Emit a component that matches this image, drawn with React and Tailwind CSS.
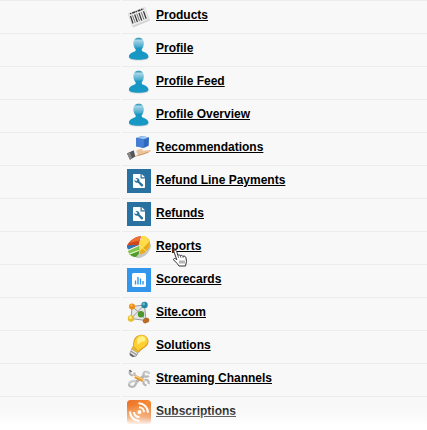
import React from "react";

function ProductsIcon() {
  return (
    <svg viewBox="0 0 24 24" className="h-6 w-6" aria-hidden="true">
      <path d="M1 10 18 4 23 16.500 6 23.500Z" fill="#cfcfcf" />
      <path d="M1 9.500 18 3.200 22 15.500 5.500 22Z" fill="#ececec" stroke="#d6d6d6" strokeWidth=".5" />
      <path d="M3 9.900 16.500 4.900" stroke="#333" strokeWidth="1.500" strokeDasharray="1.500 .8 3 .6" />
      <path d="m3.500 12 2.500 7.500M7.700 10.500l2.700 7.500M12 9l2.700 7.500M16.500 7.200l2.700 7.500" stroke="#333" strokeWidth="1.200" />
      <path d="m5.500 11.300 2.700 7.500M9.800 9.700l2.700 7.500M14.200 8.100l2.700 7.500" stroke="#777" strokeWidth="1" />
    </svg>
  );
}

function ProfileIcon() {
  return (
    <svg viewBox="0 0 24 24" className="h-6 w-6" aria-hidden="true">
      <defs>
        <linearGradient id="head" x1="0" y1="0" x2="0" y2="1">
          <stop offset="0" stopColor="#1d8eb4" />
          <stop offset=".12" stopColor="#a5d5e6" />
          <stop offset=".4" stopColor="#4aabcb" />
          <stop offset=".48" stopColor="#1697c4" />
          <stop offset="1" stopColor="#1898c4" />
        </linearGradient>
      </defs>
      <ellipse cx="11.800" cy="21.800" rx="9.500" ry="1.800" fill="#d5d5d5" />
      <path
        d="M11.600.8c3.200 0 5.200 2 5.200 5.200 0 2.700-.7 4.800-2 6.300v1.500c.2 1.200 6.700 1.600 6.700 6 0 2-4 3-9.800 3s-9.800-1-9.800-3c0-4.400 6.500-4.800 6.700-6v-1.500c-1.500-1.500-2.200-3.600-2.200-6.300 0-3.200 2-5.200 5.200-5.200Z"
        fill="url(#head)"
      />
    </svg>
  );
}

function RecommendationsIcon() {
  return (
    <svg viewBox="0 0 24 24" className="h-6 w-6" aria-hidden="true">
      <path d="m9 2 5-1.700 8 1-.3 8.500-5 2.200L9 10.300Z" fill="#2f68bd" />
      <path d="m9 2 5-1.700 8 1-5 1.900Z" fill="#9cc7f2" />
      <path d="m9 2 8 1.200-.2 8.800L9 10.300Z" fill="#447fd3" />
      <path d="m7 16 5-2.700c2-.7 4.500-.2 4 .8l-1.500 1 8-1c2.300-.1 2 1-.2 1.800l-8.300 3.100L7.500 21Z" fill="#edc49a" />
      <path d="m8 20 7-1.500 6.500-2.300" stroke="#c18756" fill="none" strokeWidth=".8" />
      <path d="m6 15.500 3-1 2 4.500-3.500 1.600Z" fill="#f3f3f3" />
      <path d="m0 17.500 6.700-3.200 1.600 6.200L3 23.800Z" fill="#555" />
      <path d="m0 17.500 3-1.500L5 22.500l-2 1.300Z" fill="#858585" />
    </svg>
  );
}

function RefundIcon() {
  return (
    <svg viewBox="0 0 24 24" className="h-6 w-6" aria-hidden="true">
      <path fill="#2871a0" d="M0 0h24v24H0z" />
      <path d="M7 5h6.500v4.500H18V18c0 .6-.4 1-1 1H7c-.6 0-1-.4-1-1V6c0-.6.4-1 1-1Z" fill="#fff" />
      <path d="m14.700 5 3.300 3.300h-3.300Z" fill="#fff" />
      <path
        d="M8.400 9.200c1.500-.7 3.500 0 4 1.600.2.600.1 1.100 0 1.500l3.500 3.300c1 1.100-.6 2.600-1.700 1.600l-3.300-3.500c-1.800.6-3.800-.5-3.500-2.900l1.700 1.500 1.500-1.500Z"
        fill="#2871a0"
      />
    </svg>
  );
}

function ReportsIcon() {
  return (
    <svg viewBox="0 0 24 24" className="h-6 w-6" aria-hidden="true">
      <path d="M1 12c4 5 5 9 9 11 7 1 14-7 14-13l-3-5Z" fill="#c5c5c5" />
      <path d="M0 10.500C2.500 5.500 8 1.800 14 1l-2.500 9.500L.8 14Z" fill="#d3471d" />
      <path d="M2 8C5 4.500 9 2 14 1l-1.500 4.500Z" fill="#ef7131" />
      <path d="m0 10.500 11.500-.8-10 4.700C.3 13.600-.2 12 0 10.500Z" fill="#2d77bb" />
      <path d="m1.300 15.200 10.200-4.200.5 7.500-3 3.500c-4.500 0-7.700-3-7.700-6.800Z" fill="#4f9d27" />
      <path d="m1.500 15.200 10-4.200.3 5-9.300 4Z" fill="#82c64b" />
      <path d="m1 15.400 10.500-4.600M2.300 19l9.500-3.500" stroke="#eef7df" strokeWidth="1" />
      <path d="M15 1.200c4-.6 8 2.500 8 7 0 5-4 9.500-9.500 11.300L12 10Z" fill="#e9ad19" />
      <path d="M15 1.200c4-.6 7 1.800 7 5.800L13 16l-1-6Z" fill="#ffdc4a" />
      <path d="m12 10 7.500 6.500" stroke="#fff3a5" strokeWidth=".7" />
    </svg>
  );
}

function ScorecardsIcon() {
  return (
    <svg viewBox="0 0 24 24" className="h-6 w-6" aria-hidden="true">
      <path fill="#3296ed" d="M0 0h24v24H0z" />
      <rect x="5" y="5" width="14" height="14" rx="1.500" fill="#fff" />
      <path d="M8.500 16.500v-4M11 16.500V9M13.500 16.500v-6M16 16.500V13" stroke="#3296ed" strokeWidth="1.400" />
    </svg>
  );
}

function SiteIcon() {
  return (
    <svg viewBox="0 0 24 24" className="h-6 w-6" aria-hidden="true">
      <path d="M5 5.500 17.500 4 19 19.500 4 17.500Z" fill="#e6e6e6" />
      <path d="M5 5.500 17.500 4 19 19.500M5 5.500 4 17.500 19 19.500M4 17.500 17.500 4M5 5.500l9 7.500 5 6.500" fill="none" stroke="#9a9a9a" strokeWidth="1" />
      <circle cx="5" cy="5.500" r="3" fill="#f08b0b" />
      <circle cx="4.500" cy="4.500" r="1.300" fill="#ffb24d" />
      <circle cx="17.500" cy="4" r="3.200" fill="#2487a2" />
      <circle cx="16.700" cy="3" r="1.400" fill="#69b6cb" />
      <circle cx="14" cy="13.200" r="3.200" fill="#4c972b" />
      <circle cx="4" cy="17.500" r="3.200" fill="#e5bd2d" />
      <circle cx="3.500" cy="16.500" r="1.500" fill="#ffec86" />
      <ellipse cx="19" cy="19.600" rx="3.400" ry="2.500" transform="rotate(-25 19 19.600)" fill="#b96c22" />
    </svg>
  );
}

function SolutionsIcon() {
  return (
    <svg viewBox="0 0 24 24" className="h-6 w-6" aria-hidden="true">
      <path d="M6 12.500C6 8 7 1 14.500.8c4 0 7 3 7 6.500 0 6-6.500 6.700-9.500 11.400Z" fill="#d69b20" />
      <path d="M6.500 12C7.500 8 8 1.500 14.500 1.300c4 0 6.200 2.700 6.200 5.700C20.700 12 15 13 11.500 17Z" fill="#ffcf32" />
      <path d="M10 6c.7-3 3.500-4.500 6.500-3.500 2 1 2.500 3 1.200 5C15 7 12 9 10.500 11.500Z" fill="#fff184" />
      <path d="m5.500 12.500 6.500 5-2 4c-2 3-8 1.500-7.500-2.500Z" fill="#999" />
      <path d="m5.500 12.500 6.500 5-1 1.500-6.500-4Z" fill="#eab52f" />
      <path d="m4.500 16 5.500 3.500M3.500 18.500l5 3" stroke="#ededed" strokeWidth="1.300" />
      <path d="m3 20 3.500 2.700" stroke="#555" strokeWidth="1.200" />
    </svg>
  );
}

function StreamingIcon() {
  return (
    <svg viewBox="0 0 24 24" className="h-6 w-6" aria-hidden="true">
      <path d="m9 15 8-6" stroke="#b5b5b5" strokeWidth="3" />
      <path d="M22 7c0-3-5.500-3-5.500.5 0 2.200 3.500 3 5.300 1.200M8.500 14.500C5.500 13 2 15 2 17.500c0 2.700 4.500 3 6 1l1.500-3" fill="none" stroke="#b8b8b8" strokeWidth="2.200" />
      <path d="M22 6.500c-.5-2-4.500-2-5 .5M8 14c-3-1-6 .8-6 3.200" fill="none" stroke="#e8e8e8" strokeWidth="1" />
      <path d="M3 4c-1.300 2.500.5 4 3 4.500M7.500 5.500 7.500 9M17 14c-1.500 2.500.5 4.500 2.500 4M17.500 13c3-1 5 1.500 4 4" fill="none" stroke="#b8b8b8" strokeWidth="2.200" />
      <path d="m8 9.500 8 4" stroke="#e39a33" strokeWidth="3.500" />
      <path d="m8.500 9 7.500 3.500" stroke="#ffd185" strokeWidth="1.300" />
      <path d="m2.500 3 2 2" stroke="#666" strokeWidth="1.500" />
    </svg>
  );
}

function SubscriptionsIcon() {
  return (
    <svg viewBox="0 0 24 24" className="h-6 w-6" aria-hidden="true">
      <defs>
        <linearGradient id="orange" x1="0" y1="0" x2="1" y2="1">
          <stop offset="0" stopColor="#e9702a" />
          <stop offset=".5" stopColor="#f58b35" />
          <stop offset="1" stopColor="#e36925" />
        </linearGradient>
      </defs>
      <rect width="24" height="24" rx="3.500" fill="url(#orange)" />
      <circle cx="12.500" cy="12" r="2" fill="#fff" />
      <path d="M12 7.200a5 5 0 0 1 5 5M11.500 3.200a9.500 9.500 0 0 1 9.500 9.500M7 12a5 5 0 0 0 5.500 5M3 11.500a9.500 9.500 0 0 0 9.500 9.500" fill="none" stroke="#fff" strokeWidth="2" />
    </svg>
  );
}

function HandCursor() {
  return (
    <svg
      viewBox="0 0 15 18"
      className="pointer-events-none absolute top-3.5 left-4 h-[18px] w-4"
      aria-hidden="true"
    >
      <path
        d="M2.500 1c1 0 1.500.8 1.800 1.800l1 3.500c1-.8 2-.4 2.500.4.900-.7 2-.3 2.500.6 1.800-.7 3 .2 3.200 1.700l.5 3.500-1 4.500H6.500l-1.800-2.500-3.500-3.500c-.6-1.500 1.200-2 2.300-.9l.8.700-2.800-8C1.200 1.800 1.700 1 2.500 1Z"
        fill="#fff"
        stroke="#333"
        strokeWidth="1"
      />
      <path d="m5.300 6.300.8 2.500M7.800 6.700l.6 2M10.300 7.300l.4 1.500M7.500 11.500v3M9.500 11.500v3M11.500 11.500v3" stroke="#444" strokeWidth=".8" />
    </svg>
  );
}

const TABS = [
  { label: "Products", Icon: ProductsIcon },
  { label: "Profile", Icon: ProfileIcon },
  { label: "Profile Feed", Icon: ProfileIcon },
  { label: "Profile Overview", Icon: ProfileIcon },
  { label: "Recommendations", Icon: RecommendationsIcon },
  { label: "Refund Line Payments", Icon: RefundIcon },
  { label: "Refunds", Icon: RefundIcon },
  { label: "Reports", Icon: ReportsIcon, hovered: true },
  { label: "Scorecards", Icon: ScorecardsIcon },
  { label: "Site.com", Icon: SiteIcon },
  { label: "Solutions", Icon: SolutionsIcon },
  { label: "Streaming Channels", Icon: StreamingIcon },
  { label: "Subscriptions", Icon: SubscriptionsIcon },
];

function TabRow({ label, Icon, hovered }) {
  return (
    <li className="grid grid-cols-[120px_1fr] gap-0.5">
      <div className="border-t border-[#ececec]" />
      <div className="flex border-t border-[#ececec] pt-[3px] pb-[5px] pl-[5px]">
        <a href="#" className="flex gap-[5px] text-black">
          <Icon />
          <span className="relative pt-[3px] text-xs leading-4 font-bold underline">
            {label}
            {hovered && <HandCursor />}
          </span>
        </a>
      </div>
    </li>
  );
}

export default function App() {
  return (
    <main className="relative bg-[#f8f8f8] font-['Liberation_Sans',Arial,sans-serif]">
      <ul>
        {TABS.map((tab) => (
          <TabRow key={tab.label} {...tab} />
        ))}
      </ul>
      {/* the list fades out at the bottom edge */}
      <div className="pointer-events-none absolute inset-x-0 bottom-0 h-6 bg-linear-to-b from-white/0 via-white/40 via-50% to-white to-85%" />
    </main>
  );
}
